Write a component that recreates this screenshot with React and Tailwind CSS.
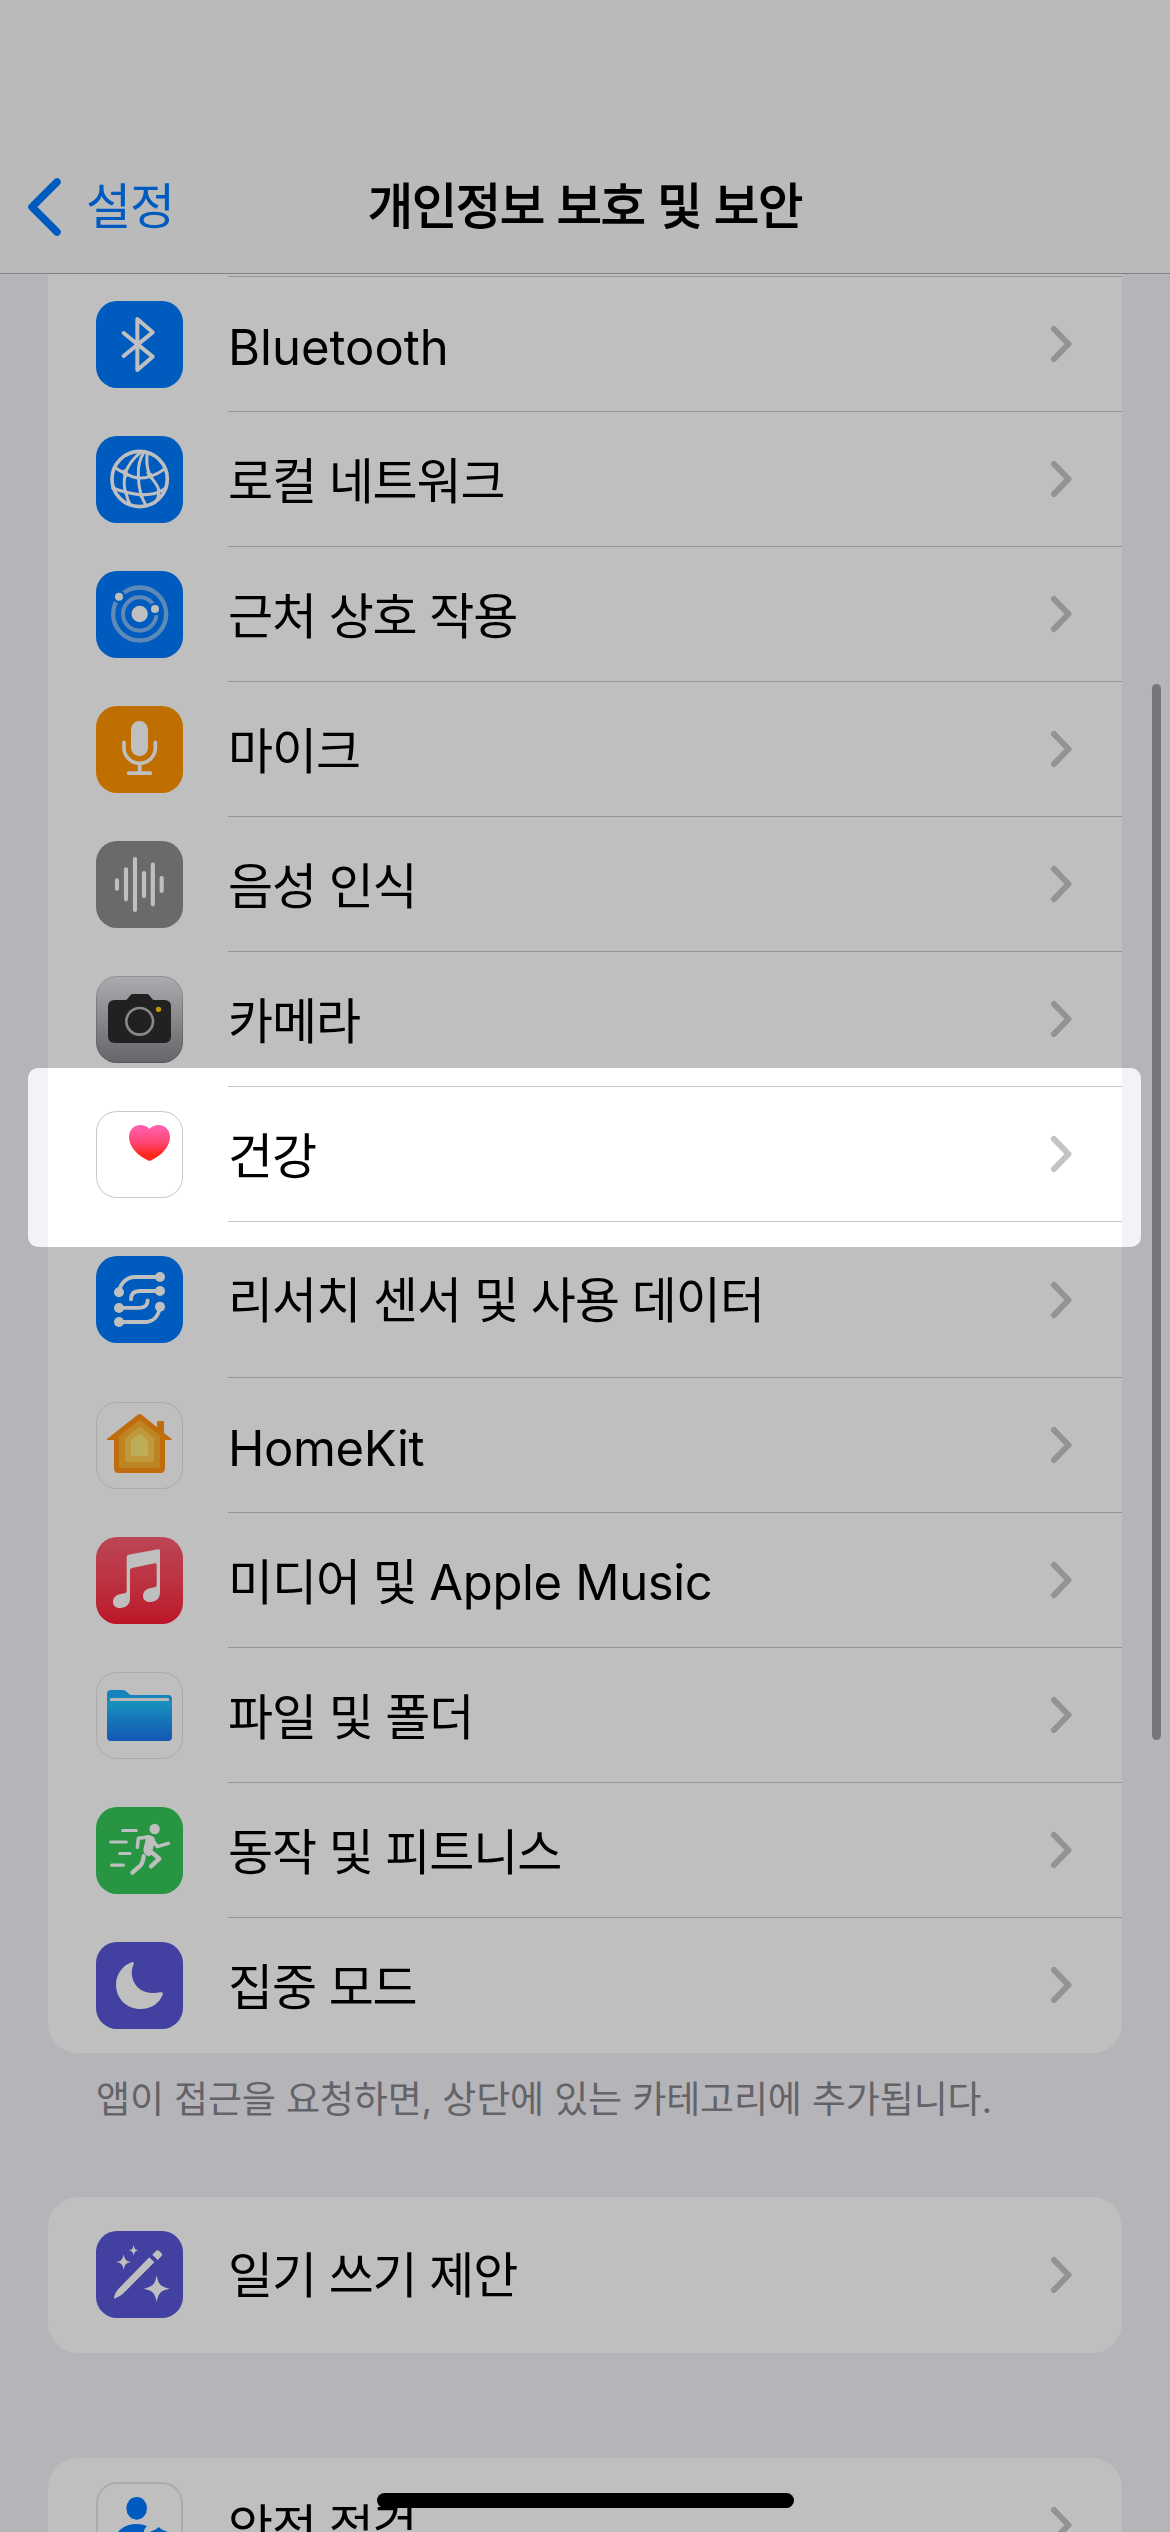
const FONT = "font-['Inter','Noto_Sans_CJK_KR',sans-serif]";

function Glyph({ children }) {
  return (
    <svg viewBox="0 0 261 261" className="block size-full" fill="none" strokeLinecap="round" strokeLinejoin="round">
      {children}
    </svg>
  );
}

const Bluetooth = () => (
  <Glyph>
    <path d="M83 96 170 167 124 207V54L170 94 83 165" stroke="#fff" strokeWidth="12" />
  </Glyph>
);

const Globe = () => (
  <Glyph>
    <g stroke="#fff" strokeWidth="9">
      <circle cx="131" cy="129" r="83" strokeWidth="11" />
      <path d="M134 49C112 66 96 88 88 112C83 134 84 158 91 175C94 188 98 198 103 207" />
      <path d="M144 49C130 70 126 92 127 116C127 140 130 158 135 176C140 190 145 200 151 210" />
      <path d="M154 49C151 72 151 92 160 114C166 130 184 142 188 162C190 176 186 188 178 198" />
      <path d="M59 96C68 103 78 108 88 112C112 126 140 129 160 122C178 117 194 108 206 98" />
      <path d="M50 156C76 166 104 174 135 176C162 178 190 170 210 156" />
    </g>
    <path d="M76 106 88 98 99 116 88 128ZM150 108 168 112 174 134 158 126ZM122 172 148 172 138 190Z" fill="#fff" />
  </Glyph>
);

const Nearby = () => (
  <Glyph>
    <circle cx="131" cy="129" r="79.500" stroke="#7fb7f5" strokeWidth="13" />
    <circle cx="131" cy="129" r="50" stroke="#7fb7f5" strokeWidth="12" />
    <circle cx="69" cy="77" r="19" fill="#007aff" />
    <circle cx="177" cy="114" r="19" fill="#007aff" />
    <circle cx="131" cy="129" r="24.500" fill="#fff" />
    <circle cx="69" cy="77" r="12" fill="#fff" />
    <circle cx="177" cy="114" r="12" fill="#fff" />
  </Glyph>
);

const Mic = () => (
  <Glyph>
    <rect x="105" y="45" width="51" height="106" rx="25.500" fill="#fff" />
    <path d="M84 109V125a47 47 0 0 0 94 0V109M131 173V201M98 201.500H163" stroke="#fff" strokeWidth="11" />
  </Glyph>
);

const Wave = () => (
  <Glyph>
    <path d="M63 118V143M90 85V175M117 54V207M144 96V165M170.500 71V190M197 111V150" stroke="#fff" strokeWidth="12.500" />
  </Glyph>
);

const Camera = () => (
  <Glyph>
    <path
      d="M56 72H88C94 72 96 66 101 60 105 55 108 54 114 54H149C155 54 158 55 162 60 167 66 169 72 175 72H205Q225 72 225 92V181Q225 201 205 201H56Q36 201 36 181V92Q36 72 56 72Z"
      fill="#2d2d2d"
    />
    <circle cx="131" cy="136" r="40" stroke="#b6b6bb" strokeWidth="8" />
    <circle cx="187.500" cy="100" r="8" fill="#ffd00a" />
  </Glyph>
);

const Heart = () => (
  <Glyph>
    <defs>
      <linearGradient id="heart" x1="0" y1="0" x2="0" y2="1">
        <stop offset="0.050" stopColor="#ff61ad" />
        <stop offset="0.500" stopColor="#ff4470" />
        <stop offset="0.850" stopColor="#ff2719" />
      </linearGradient>
    </defs>
    <path
      d="M160.500 54C168 45 178 42 188 42 208 42 222 57 222 79 222 107 196 134 166 148Q160.500 151 155 148C125 134 99 107 99 79 99 57 113 42 133 42 143 42 153 45 160.500 54Z"
      fill="url(#heart)"
    />
  </Glyph>
);

const Research = () => (
  <Glyph>
    <path
      d="M192 63H118C89 63 72 84 69 109M192 105H131C114 105 105 112 105 130M69 155.500H130C147 155.500 155 149 155 133M69 198H146C172 198 188 180 192 152"
      stroke="#fff"
      strokeWidth="11.500"
    />
    <g fill="#fff">
      <circle cx="192" cy="63" r="15" />
      <circle cx="69" cy="109" r="15" />
      <circle cx="192" cy="105" r="15" />
      <circle cx="69" cy="156" r="15" />
      <circle cx="192" cy="152" r="15" />
      <circle cx="69" cy="198" r="15" />
    </g>
  </Glyph>
);

const House = () => (
  <Glyph>
    <path
      d="M125 38Q131 34 137 38L183 76V61Q183 57 187 57H200Q204 57 204 61V93L227 111V114H207V199Q207 213 193 213H68Q54 213 54 199V114H33V111Z"
      fill="#ff9010"
    />
    <path d="M131 53 192 101V190Q192 198 184 198H77Q69 198 69 190V101Z" fill="#fcb22c" />
    <path d="M131 73 174 109V174Q174 180 168 180H93Q87 180 87 174V109Z" fill="#ffcd50" />
    <path d="M131 94 156 115V162H105V115Z" fill="#fee776" />
  </Glyph>
);

const Music = () => (
  <Glyph>
    <path
      d="M92 60Q92 54 98 53L186 37Q192 36 192 42V166C192 184 181 195 162 195 149 195 141 188 141 177 141 164 150 156 164 153L176 151Q182 150 182 144V84Q182 77 176 79L108 93Q102 94 102 100V184C102 202 91 213 72 213 59 213 51 206 51 195 51 182 60 174 74 171L86 169Q92 168 92 162Z"
      fill="#fff"
    />
  </Glyph>
);

const Folder = () => (
  <Glyph>
    <defs>
      <linearGradient id="folder" x1="0" y1="0" x2="0" y2="1">
        <stop offset="0" stopColor="#20c4fb" />
        <stop offset="1" stopColor="#1a74f2" />
      </linearGradient>
    </defs>
    <path d="M33 66Q33 54 45 54H80Q87 54 92 59L98 65Q102 69 108 69H216Q228 69 228 81V120H33Z" fill="#1bb0f8" />
    <path d="M42 88V82Q42 78 46 78H215Q219 78 219 82V88Z" fill="#f4f6f8" />
    <path d="M33 87H228V195Q228 207 216 207H45Q33 207 33 195Z" fill="url(#folder)" />
  </Glyph>
);

const Runner = () => (
  <Glyph>
    <circle cx="176" cy="66" r="15.500" fill="#fff" />
    <g stroke="#fff">
      <path d="M80 70.500H121M44 105H91M71 139.500H102M47 174.500H82" strokeWidth="9.500" />
      <path d="M124 121 127 94 158 90M166 94 184 119 217 109" strokeWidth="10.500" />
      <path d="M143 147C142 158 140 168 133 176L109 197" strokeWidth="12.500" />
      <path d="M160 130 190 155 165 178" strokeWidth="13" />
    </g>
    <path
      d="M142 87C154 84 166 84 173 90 179 96 178 105 175 112L169 131 172 142 158 148C146 142 140 135 143 122L149 98Z"
      fill="#fff"
    />
  </Glyph>
);

const Moon = () => (
  <Glyph>
    <path
      d="M107 61Q115 58 113 66C107 80 106 94 109 107C117 140 150 160 192 151Q203 149 200 158C190 184 165 201 134 201 93 201 60 170 60 128 60 97 80 70 107 61Z"
      fill="#fff"
    />
  </Glyph>
);

const Wand = () => (
  <Glyph>
    <g fill="#fff">
      <path d="M160 79 175 94 80 189Q72 196 58 202 53 203 54 198 58 184 65 176Z" />
      <path d="M169 71 180 60Q185 55 191 61L195 65Q201 70 196 76L185 87Z" />
      <path d="M83 69C86 86 90 91 106 93 90 96 86 100 83 117 80 100 76 96 60 93 76 91 80 86 83 69Z" />
      <path d="M113 42C115 53 118 57 129 58 118 60 115 63 113 75 111 63 108 60 97 58 108 57 111 53 113 42Z" />
      <path d="M182 133C187 160 194 168 222 173 194 178 187 186 182 213 177 186 170 178 142 173 170 168 177 160 182 133Z" />
    </g>
  </Glyph>
);

const Safety = () => (
  <Glyph>
    <g fill="#007aff">
      <ellipse cx="122" cy="79" rx="31" ry="34" />
      <path d="M56 175C60 142 92 126 122 126 134 126 144 128 153 133 146 139 143 145 143 155V190H56Z" />
      <path d="M151 152C168 149 178 144 188 135 198 144 208 149 225 152V190H151Z" />
    </g>
  </Glyph>
);

const SERVICES = [
  { label: 'Bluetooth', icon: Bluetooth, tile: 'bg-[#007aff]', text: 'tracking-normal pt-[7px]' },
  { label: '로컬 네트워크', icon: Globe, tile: 'bg-[#007aff]' },
  { label: '근처 상호 작용', icon: Nearby, tile: 'bg-[#007aff]' },
  { label: '마이크', icon: Mic, tile: 'bg-[#ff9500]' },
  { label: '음성 인식', icon: Wave, tile: 'bg-[#8e8e90]' },
  {
    label: '카메라',
    icon: Camera,
    tile: 'bg-linear-to-b from-[#e6e5ea] to-[#88878c] inset-ring inset-ring-[#00000026]',
  },
  { label: '건강', icon: Heart, tile: 'bg-white inset-ring inset-ring-[#c9c9cb]' },
  {
    label: '리서치 센서 및 사용 데이터',
    icon: Research,
    tile: 'bg-[#007aff] -translate-y-px',
    tall: true,
    text: 'tracking-[-1px] pt-[3px]',
  },
  {
    label: 'HomeKit',
    icon: House,
    tile: 'bg-white inset-ring inset-ring-[#e4e4e6]',
    text: 'tracking-[-0.4px] pt-[7px]',
  },
  {
    label: '미디어 및 ',
    latinTail: 'Apple Music',
    icon: Music,
    tile: 'bg-linear-to-b from-[#fb5c74] to-[#fa1a34]',
  },
  { label: '파일 및 폴더', icon: Folder, tile: 'bg-white inset-ring inset-ring-[#e4e4e6]' },
  { label: '동작 및 피트니스', icon: Runner, tile: 'bg-[#34c759]' },
  { label: '집중 모드', icon: Moon, tile: 'bg-[#5856d6]' },
];

function Row({ label, latinTail, icon: Icon, tile, tall, text = 'tracking-[-1.1px] pt-[5px]', last }) {
  return (
    <div className={`flex shrink-0 items-center pl-12 ${tall ? 'h-[156px]' : 'h-[135px]'}`}>
      <div className={`size-[87px] shrink-0 overflow-hidden rounded-[21px] ${tile}`}>
        <Icon />
      </div>
      <div
        className={`ml-[45px] flex flex-1 items-center justify-between self-stretch border-b pr-[49px] ${
          last ? 'border-transparent' : 'border-[#c6c6c8]'
        }`}
      >
        <span className={`whitespace-pre text-[49px] leading-[60px] text-black ${text}`}>
          {label}
          {latinTail && <span className="tracking-[-0.35px]">{latinTail}</span>}
        </span>
        <svg width="23" height="38" viewBox="0 0 23 38" fill="none" className="shrink-0">
          <path d="M4 4 18.500 19 4 34" stroke="#c4c4c6" strokeWidth="6" strokeLinecap="round" strokeLinejoin="round" />
        </svg>
      </div>
    </div>
  );
}

export default function App() {
  return (
    <div className={`relative flex h-[2532px] w-[1170px] flex-col overflow-hidden bg-[#f2f2f7] ${FONT}`}>
      <header className="grid h-[274px] shrink-0 grid-cols-[1fr_auto_1fr] items-end border-b border-[#aeaeb0] bg-[#f8f8f8] pb-9">
        <div className="flex items-center gap-[24px] pl-[26px] text-[#007aff]">
          <svg width="36" height="60" viewBox="0 0 36 60" fill="none">
            <path d="M31 5 6 30 31 55" stroke="currentColor" strokeWidth="7.500" strokeLinecap="round" strokeLinejoin="round" />
          </svg>
          <span className="text-[49px] leading-[60px] tracking-[-1.1px]">설정</span>
        </div>
        <h1 className="text-[49px] leading-[60px] tracking-[-1.1px] text-black [-webkit-text-stroke:1.4px_black]">
          개인정보 보호 및 보안
        </h1>
        <span />
      </header>

      <main className="flex flex-col px-12">
        <section className="flex flex-col rounded-b-[30px] bg-white">
          <div className="ml-[180px] h-[3px] border-b border-[#c6c6c8]" />
          {SERVICES.map((item, i) => (
            <Row key={item.label} {...item} last={i === SERVICES.length - 1} />
          ))}
        </section>
        <p className="h-36 whitespace-nowrap pl-12 pt-[22px] text-[37px] leading-[50px] tracking-[-0.15px] text-[#85858b]">
          앱이 접근을 요청하면, 상단에 있는 카테고리에 추가됩니다.
        </p>
        <section className="rounded-[30px] bg-white">
          <Row
            label="일기 쓰기 제안"
            icon={Wand}
            tile="bg-[#5856d6] -translate-y-px"
            text="tracking-[-1.1px] pt-[3px]"
            tall
            last
          />
        </section>
        <section className="mt-[105px] rounded-t-[30px] bg-white">
          <Row label="안전 점검" icon={Safety} tile="bg-white inset-ring-2 inset-ring-[#e4e4e6]" last />
        </section>
      </main>

      <div className="absolute left-[1152px] top-[684px] h-[1056px] w-[9px] rounded-full bg-[#9e9ea0]" />
      <div className="absolute left-[28px] top-[1068px] h-[179px] w-[1113px] rounded-[10px] shadow-[0_0_0_3000px_rgba(0,0,0,0.25)]" />
      <div className="absolute left-[377px] top-[2493px] h-[15px] w-[417px] rounded-full bg-black" />
    </div>
  );
}
